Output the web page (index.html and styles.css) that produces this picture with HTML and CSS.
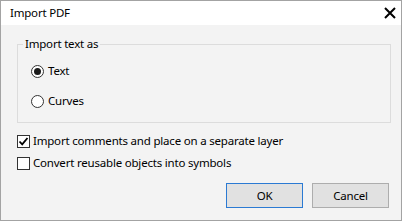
FILE: index.html
```html
<!DOCTYPE html>
<html>
<head>
<meta charset="utf-8">
<link rel="stylesheet" href="styles.css">
</head>
<body>
<div class="window">
  <div class="titlebar">
    <span class="title">Import PDF</span>
    <span class="close">
      <svg width="14" height="12" viewBox="0 0 14 12"><path d="M2 1 L12 11 M12 1 L2 11" stroke="#000" stroke-width="2" fill="none"/></svg>
    </span>
  </div>
  <div class="content">
    <fieldset class="group">
      <legend class="legend">Import text as</legend>
      <div class="options">
        <div class="row"><span class="radio checked"></span><span>Text</span></div>
        <div class="row row-gap"><span class="radio"></span><span>Curves</span></div>
      </div>
    </fieldset>
    <div class="checks">
      <div class="row"><span class="checkbox">
        <svg width="11" height="11" viewBox="0 0 11 11"><path d="M1.5 5.5 L4.2 8.3 L9.5 2" stroke="#000" stroke-width="1.8" fill="none"/></svg>
      </span><span>Import comments and place on a separate layer</span></div>
      <div class="row row-check2"><span class="checkbox"></span><span>Convert reusable objects into symbols</span></div>
    </div>
    <div class="buttons">
      <div class="btn btn-default">OK</div>
      <div class="btn">Cancel</div>
    </div>
  </div>
</div>
</body>
</html>
```
FILE: styles.css
```css
* { box-sizing: border-box; }
html, body { margin: 0; padding: 0; background: #ffffff; }
body {
  font-family: "Noto Sans", "Open Sans", sans-serif;
  font-size: 11.5px;
  letter-spacing: -0.2px;
  color: #000;
}
.window {
  width: 402px;
  height: 221px;
  border: 1px solid #a3a3a3;
  background: #f3f3f3;
  display: flex;
  flex-direction: column;
}
.titlebar {
  height: 24px;
  background: #ffffff;
  display: flex;
  align-items: center;
  justify-content: space-between;
  padding: 0 4px 0 9px;
}
.title { line-height: 16px; }
.close { display: flex; width: 14px; height: 12px; margin-right: 0; }
.content {
  padding: 11px 10px 0 16px;
  display: flex;
  flex-direction: column;
}
.group {
  margin: 0;
  border: 1px solid #dcdcdc;
  padding: 11px 0 13px 5px;
  min-width: 0;
}
.legend {
  padding: 0 2px;
  line-height: 16px;
}
.options { padding-left: 8px; }
.row {
  display: flex;
  align-items: center;
  height: 16px;
  line-height: 16px;
  gap: 4px;
}
.row-gap { margin-top: 14px; }
.radio {
  width: 13px;
  height: 13px;
  border: 1px solid #333;
  border-radius: 50%;
  background: #fff;
  display: flex;
  align-items: center;
  justify-content: center;
}
.radio.checked::after {
  content: "";
  width: 7px;
  height: 7px;
  border-radius: 50%;
  background: #1a1a1a;
}
.checks { margin-top: 10px; }
.checks .row { gap: 3px; }
.row-check2 { margin-top: 6px; }
.checkbox {
  width: 13px;
  height: 13px;
  border: 1px solid #333;
  background: #fff;
  display: flex;
  align-items: center;
  justify-content: center;
}
.buttons {
  margin-top: 12px;
  margin-right: 2px;
  display: flex;
  justify-content: flex-end;
  gap: 9px;
}
.btn {
  width: 77px;
  height: 25px;
  background: #e1e1e1;
  border: 1px solid #adadad;
  display: flex;
  align-items: center;
  justify-content: center;
}
.btn-default { border-color: #2b7ad3; }
```
